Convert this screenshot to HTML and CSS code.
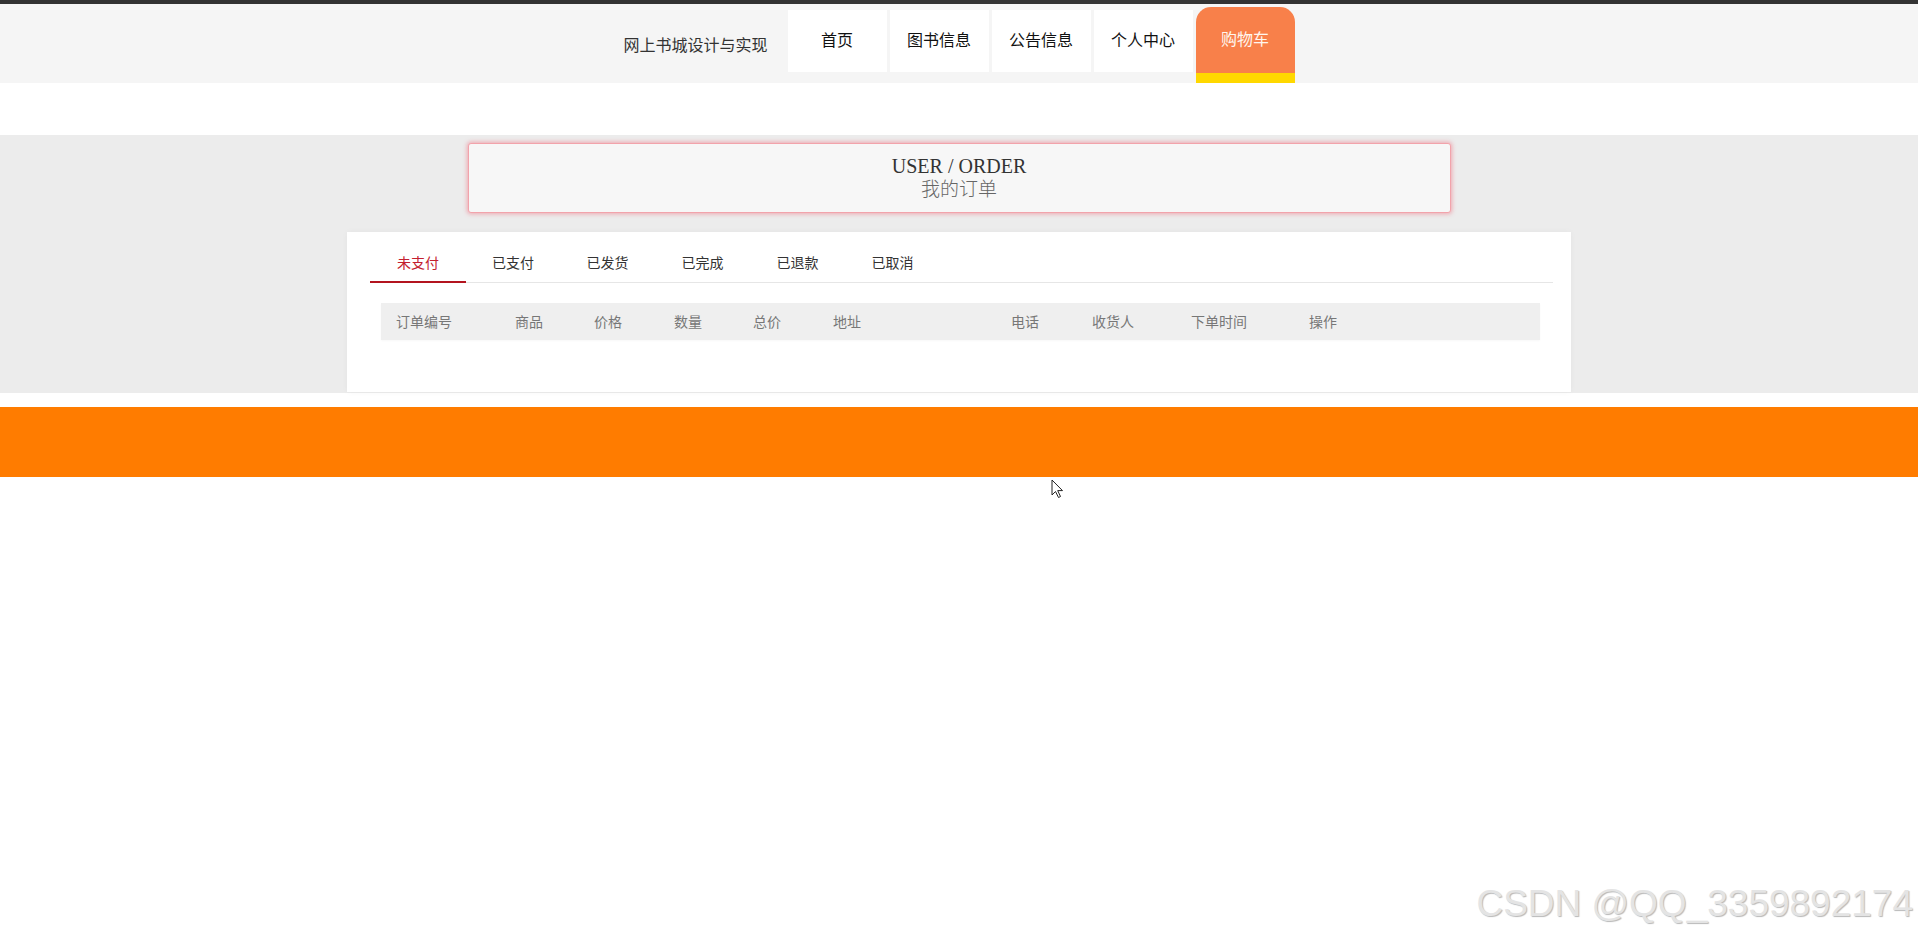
FILE: index.html
```html
<!DOCTYPE html>
<html lang="zh-CN">
<head>
<meta charset="utf-8">
<title>我的订单</title>
<link rel="stylesheet" href="styles.css">
</head>
<body>
<div class="topline"></div>
<header class="header">
  <div class="header-inner">
    <div class="brand">网上书城设计与实现</div>
    <nav class="nav">
      <a class="nav-item">首页</a>
      <a class="nav-item">图书信息</a>
      <a class="nav-item">公告信息</a>
      <a class="nav-item">个人中心</a>
      <a class="nav-item active">购物车</a>
    </nav>
  </div>
</header>

<main class="band">
  <div class="banner">
    <div class="banner-en">USER / ORDER</div>
    <div class="banner-cn">我的订单</div>
  </div>
  <section class="panel">
    <div class="tabs">
      <div class="tab active">未支付</div>
      <div class="tab">已支付</div>
      <div class="tab">已发货</div>
      <div class="tab">已完成</div>
      <div class="tab">已退款</div>
      <div class="tab">已取消</div>
    </div>
    <div class="thead">
      <div class="th">订单编号</div>
      <div class="th">商品</div>
      <div class="th">价格</div>
      <div class="th">数量</div>
      <div class="th">总价</div>
      <div class="th">地址</div>
      <div class="th">电话</div>
      <div class="th">收货人</div>
      <div class="th">下单时间</div>
      <div class="th">操作</div>
    </div>
  </section>
</main>

<footer class="footer"></footer>

<svg class="cursor" width="14" height="20" viewBox="0 0 14 20"><path d="M1 1 L1 16 L4.5 12.5 L7.5 18.5 L9.5 17.5 L6.7 11.6 L11.5 11.6 Z" fill="#fff" stroke="#222" stroke-width="1" stroke-linejoin="round"/></svg>

<div class="watermark">CSDN @QQ_3359892174</div>
</body>
</html>
```

FILE: styles.css
```css
* { box-sizing: border-box; }

html, body {
  margin: 0;
  padding: 0;
  background: #fff;
  font-family: "Noto Sans CJK SC", "Noto Sans", sans-serif;
  color: #333;
}

body { position: relative; min-height: 936px; }

.topline {
  height: 4px;
  background: #333;
}

.header {
  height: 79px;
  background: #f5f5f5;
  display: flex;
  justify-content: center;
}

.header-inner {
  display: flex;
  align-items: flex-start;
}

.brand {
  margin-top: 30px;
  margin-right: 21px;
  font-size: 16px;
  line-height: 20px;
  color: #333;
  width: 143px;
  white-space: nowrap;
}

.nav {
  display: flex;
  gap: 3px;
}

.nav-item {
  width: 99px;
  height: 62px;
  margin-top: 6px;
  padding-bottom: 5px;
  background: #fff;
  display: flex;
  align-items: center;
  justify-content: center;
  font-size: 16px;
  color: #111;
  text-decoration: none;
}

.nav-item.active {
  margin-top: 3px;
  height: 76px;
  padding-bottom: 5px;
  background: #f8804a;
  border-bottom: 10px solid #ffd800;
  border-radius: 15px 15px 0 0;
  color: #fff6ee;
}

.band {
  margin-top: 52px;
  background: #ececec;
  padding: 8px 0 1px;
}

.banner {
  width: 983px;
  height: 70px;
  margin: 0 auto;
  padding-top: 11px;
  background: #f7f7f7;
  border: 1px solid #f2a3ab;
  border-radius: 3px;
  box-shadow: 0 0 4px 1px rgba(240, 110, 125, 0.55);
  text-align: center;
}

.banner-en {
  font-family: "Liberation Serif", serif;
  font-size: 20px;
  line-height: 22px;
  color: #333;
}

.banner-cn {
  font-family: "Noto Sans CJK SC", serif;
  font-size: 19px;
  line-height: 22px;
  color: #666;
  font-weight: 300;
}

.panel {
  width: 1224px;
  margin: 19px auto 0;
  background: #fff;
  padding: 12px 18px 52px 23px;
  box-shadow: 0 0 6px rgba(0, 0, 0, 0.04);
}

.tabs {
  display: flex;
  border-bottom: 1px solid #e6e6e6;
  height: 39px;
}

.tab {
  width: 95px;
  height: 39px;
  line-height: 37px;
  text-align: center;
  font-size: 14px;
  color: #333;
  border-bottom: 2px solid transparent;
}

.tab.active {
  width: 96px;
  color: #c3202f;
  border-bottom-color: #b3141f;
}

.tabs .tab:nth-child(2) { width: 94px; }

.thead {
  margin: 20px 13px 0 11px;
  height: 37px;
  background: #efefef;
  display: grid;
  grid-template-columns: 119px 79px 80px 79px 80px 178px 81px 99px 118px 1fr;
  box-shadow: 0 1px 2px rgba(0, 0, 0, 0.03);
}

.th {
  padding-left: 15px;
  line-height: 37px;
  font-size: 14px;
  color: #777;
  white-space: nowrap;
}

.footer {
  margin-top: 14px;
  height: 70px;
  background: #ff7c00;
}

.cursor {
  position: absolute;
  left: 1051px;
  top: 479px;
}

.watermark {
  position: absolute;
  right: 5px;
  top: 882px;
  font-family: "Liberation Sans", Arial, sans-serif;
  font-size: 37px;
  line-height: 44px;
  color: #e4e4e4;
  text-shadow: 1px 1px 1px #b8b8b8;
  white-space: nowrap;
}
```
